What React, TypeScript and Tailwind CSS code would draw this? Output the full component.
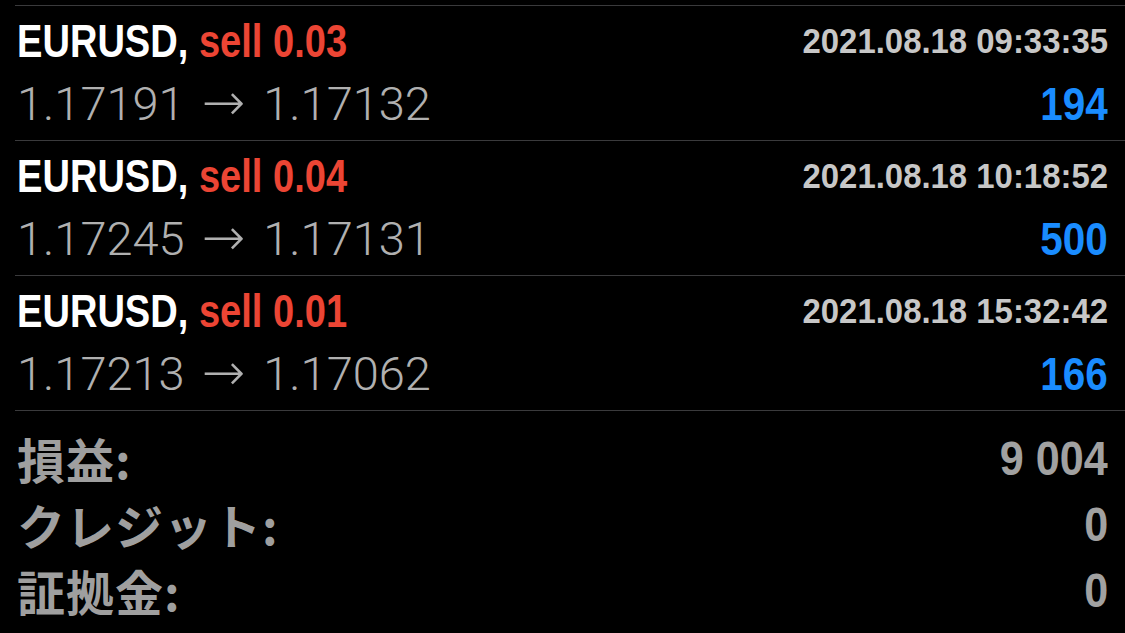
import React from "react";

const trades = [
  { lot: "0.03", date: "2021.08.18 09:33:35", open: "1.17191", close: "1.17132", profit: "194" },
  { lot: "0.04", date: "2021.08.18 10:18:52", open: "1.17245", close: "1.17131", profit: "500" },
  { lot: "0.01", date: "2021.08.18 15:32:42", open: "1.17213", close: "1.17062", profit: "166" },
];

const summary = [
  { label: "損益:", value: "9 004" },
  { label: "クレジット:", value: "0" },
  { label: "証拠金:", value: "0" },
  { label: "残高:", value: "" },
];

export default function App() {
  return (
    <div className="w-[1125px] h-[633px] bg-black overflow-hidden">
      <div className="h-[5px]" />
      {trades.map((t, i) => (
        <div key={i} className="ml-[15px] border-t border-[#3a3a3c] h-[135px] pl-[2px] pr-[17px]">
          <div className="flex justify-between items-start pt-[11px]">
            <div className="font-['Liberation_Sans',sans-serif] font-bold text-[47px] leading-none text-white whitespace-nowrap origin-left scale-x-[0.81]">
              EURUSD, <span className="text-[#ec4534]">sell {t.lot}</span>
            </div>
            <div className="font-['Liberation_Sans',sans-serif] font-bold text-[35px] leading-none text-[#c7c7c7] whitespace-nowrap mt-[6px] origin-right scale-x-[0.94]">
              {t.date}
            </div>
          </div>
          <div className="flex justify-between items-baseline mt-[16px]">
            <div className="font-['Roboto',sans-serif] font-light text-[47px] leading-none text-[#b0b0b0] whitespace-nowrap">
              {t.open}
              <span className="font-['DejaVu_Sans',sans-serif] font-extralight text-[52px] leading-[0] ml-[17px] mr-[18px]">→</span>
              {t.close}
            </div>
            <div className="font-['Liberation_Sans',sans-serif] font-bold text-[46px] leading-none text-[#1a8cff] origin-right scale-x-[0.88]">
              {t.profit}
            </div>
          </div>
        </div>
      ))}
      <div className="ml-[15px] border-t border-[#3a3a3c] pl-[2px] pr-[17px] pt-[14px]">
        {summary.map((s, i) => (
          <div key={i} className="flex justify-between items-center h-[66px]">
            <div className="font-['Noto_Sans_CJK_JP',sans-serif] font-bold text-[48px] leading-none tracking-[1px] text-[#9f9f9f] whitespace-nowrap">
              {s.label}
            </div>
            <div className="font-['Liberation_Sans',sans-serif] font-bold text-[49px] leading-none text-[#a1a1a1] origin-right scale-x-[0.88] whitespace-nowrap">
              {s.value}
            </div>
          </div>
        ))}
      </div>
    </div>
  );
}
